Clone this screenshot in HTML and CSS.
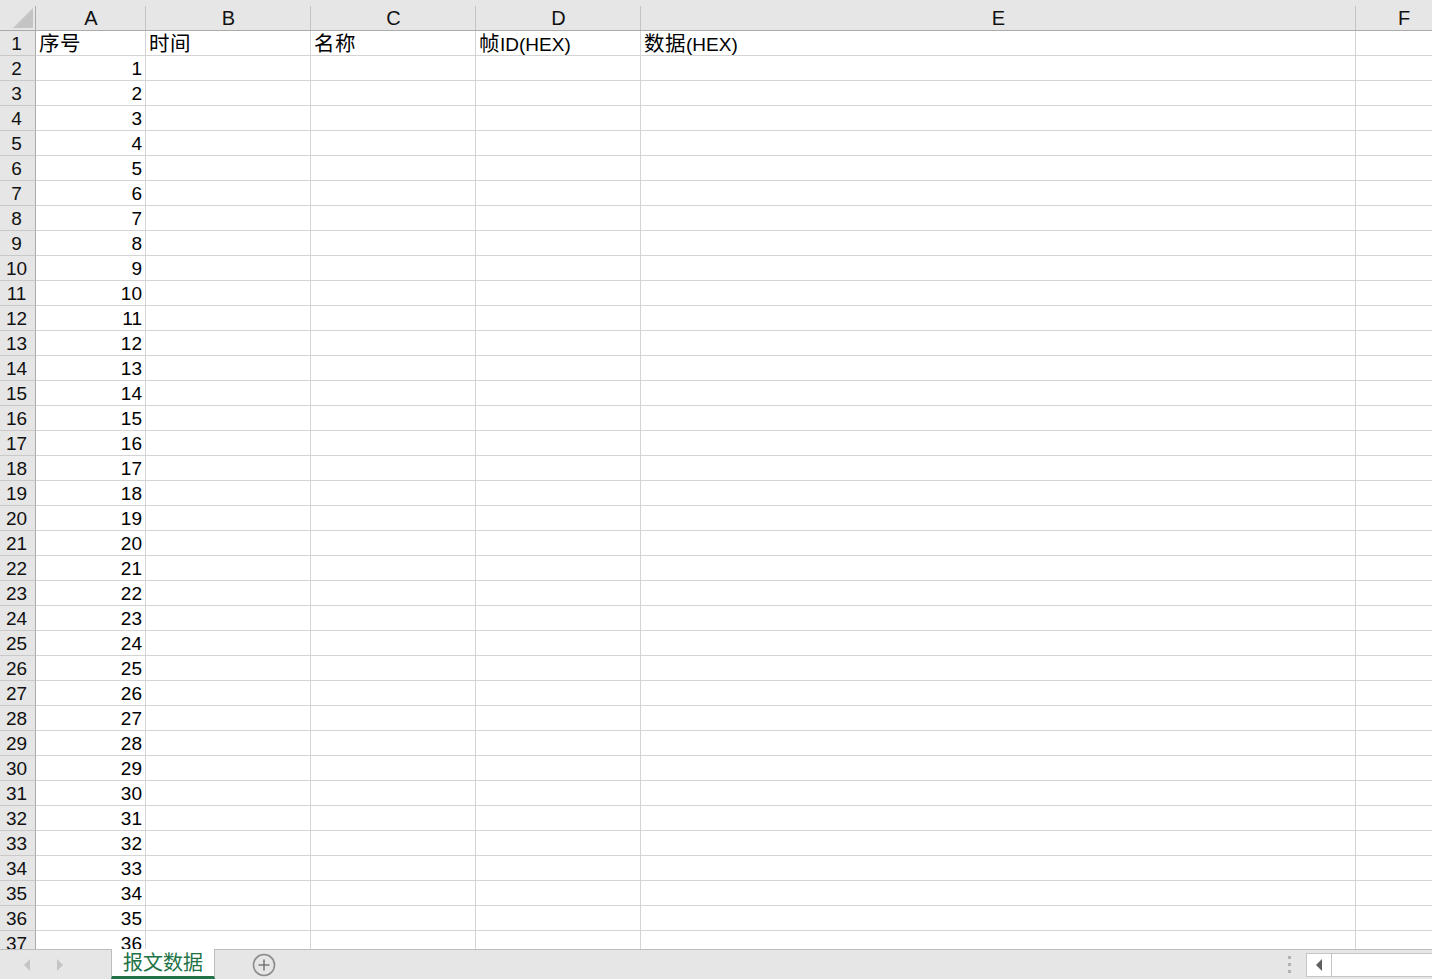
FILE: index.html
```html
<!DOCTYPE html>
<html lang="zh-CN">
<head>
    <meta charset="UTF-8">
    <title>报文数据</title>
    <link rel="stylesheet" href="styles.css">
</head>
<body>
<div class="book">
    <div class="sheet">
        <div class="row head">
            <span class="corner"><i class="tri"></i></span><span>A</span><span>B</span><span>C</span><span>D</span><span>E</span><span>F</span>
        </div>
        <div class="row"><span class="rh">1</span><span><em>序号</em></span><span><em>时间</em></span><span><em>名称</em></span><span><em>帧</em>ID(HEX)</span><span><em>数据</em>(HEX)</span><span></span></div>
        <div class="row"><span class="rh">2</span><span class="num">1</span><span></span><span></span><span></span><span></span><span></span></div>
        <div class="row"><span class="rh">3</span><span class="num">2</span><span></span><span></span><span></span><span></span><span></span></div>
        <div class="row"><span class="rh">4</span><span class="num">3</span><span></span><span></span><span></span><span></span><span></span></div>
        <div class="row"><span class="rh">5</span><span class="num">4</span><span></span><span></span><span></span><span></span><span></span></div>
        <div class="row"><span class="rh">6</span><span class="num">5</span><span></span><span></span><span></span><span></span><span></span></div>
        <div class="row"><span class="rh">7</span><span class="num">6</span><span></span><span></span><span></span><span></span><span></span></div>
        <div class="row"><span class="rh">8</span><span class="num">7</span><span></span><span></span><span></span><span></span><span></span></div>
        <div class="row"><span class="rh">9</span><span class="num">8</span><span></span><span></span><span></span><span></span><span></span></div>
        <div class="row"><span class="rh">10</span><span class="num">9</span><span></span><span></span><span></span><span></span><span></span></div>
        <div class="row"><span class="rh">11</span><span class="num">10</span><span></span><span></span><span></span><span></span><span></span></div>
        <div class="row"><span class="rh">12</span><span class="num">11</span><span></span><span></span><span></span><span></span><span></span></div>
        <div class="row"><span class="rh">13</span><span class="num">12</span><span></span><span></span><span></span><span></span><span></span></div>
        <div class="row"><span class="rh">14</span><span class="num">13</span><span></span><span></span><span></span><span></span><span></span></div>
        <div class="row"><span class="rh">15</span><span class="num">14</span><span></span><span></span><span></span><span></span><span></span></div>
        <div class="row"><span class="rh">16</span><span class="num">15</span><span></span><span></span><span></span><span></span><span></span></div>
        <div class="row"><span class="rh">17</span><span class="num">16</span><span></span><span></span><span></span><span></span><span></span></div>
        <div class="row"><span class="rh">18</span><span class="num">17</span><span></span><span></span><span></span><span></span><span></span></div>
        <div class="row"><span class="rh">19</span><span class="num">18</span><span></span><span></span><span></span><span></span><span></span></div>
        <div class="row"><span class="rh">20</span><span class="num">19</span><span></span><span></span><span></span><span></span><span></span></div>
        <div class="row"><span class="rh">21</span><span class="num">20</span><span></span><span></span><span></span><span></span><span></span></div>
        <div class="row"><span class="rh">22</span><span class="num">21</span><span></span><span></span><span></span><span></span><span></span></div>
        <div class="row"><span class="rh">23</span><span class="num">22</span><span></span><span></span><span></span><span></span><span></span></div>
        <div class="row"><span class="rh">24</span><span class="num">23</span><span></span><span></span><span></span><span></span><span></span></div>
        <div class="row"><span class="rh">25</span><span class="num">24</span><span></span><span></span><span></span><span></span><span></span></div>
        <div class="row"><span class="rh">26</span><span class="num">25</span><span></span><span></span><span></span><span></span><span></span></div>
        <div class="row"><span class="rh">27</span><span class="num">26</span><span></span><span></span><span></span><span></span><span></span></div>
        <div class="row"><span class="rh">28</span><span class="num">27</span><span></span><span></span><span></span><span></span><span></span></div>
        <div class="row"><span class="rh">29</span><span class="num">28</span><span></span><span></span><span></span><span></span><span></span></div>
        <div class="row"><span class="rh">30</span><span class="num">29</span><span></span><span></span><span></span><span></span><span></span></div>
        <div class="row"><span class="rh">31</span><span class="num">30</span><span></span><span></span><span></span><span></span><span></span></div>
        <div class="row"><span class="rh">32</span><span class="num">31</span><span></span><span></span><span></span><span></span><span></span></div>
        <div class="row"><span class="rh">33</span><span class="num">32</span><span></span><span></span><span></span><span></span><span></span></div>
        <div class="row"><span class="rh">34</span><span class="num">33</span><span></span><span></span><span></span><span></span><span></span></div>
        <div class="row"><span class="rh">35</span><span class="num">34</span><span></span><span></span><span></span><span></span><span></span></div>
        <div class="row"><span class="rh">36</span><span class="num">35</span><span></span><span></span><span></span><span></span><span></span></div>
        <div class="row"><span class="rh">37</span><span class="num">36</span><span></span><span></span><span></span><span></span><span></span></div>
    </div>
    <div class="tabbar">
        <div class="navs">
            <svg width="10" height="14" viewBox="0 0 10 14"><path d="M8 1 L2 7 L8 13 Z" fill="#c4c4c4"/></svg>
            <svg width="10" height="14" viewBox="0 0 10 14"><path d="M2 1 L8 7 L2 13 Z" fill="#c4c4c4"/></svg>
        </div>
        <div class="tab">报文数据</div>
        <div class="add">
            <svg width="26" height="26" viewBox="0 0 26 26"><circle cx="13" cy="13" r="10.5" fill="none" stroke="#8c8c8c" stroke-width="1.6"/><path d="M13 7.5 V18.5 M7.5 13 H18.5" stroke="#7a7a7a" stroke-width="1.6"/></svg>
        </div>
        <div class="grow"></div>
        <div class="dots"><i></i><i></i><i></i></div>
        <div class="hscroll">
            <span class="arrow"><svg width="8" height="12" viewBox="0 0 8 12"><path d="M7 0 L1 6 L7 12 Z" fill="#606060"/></svg></span>
            <span class="track"></span>
        </div>
    </div>
</div>
</body>
</html>
```

FILE: styles.css
```css
* {
    margin: 0;
    padding: 0;
    box-sizing: border-box;
}
body {
    width: 1432px;
    height: 979px;
    overflow: hidden;
    background: #fff;
    font-family: "Liberation Sans", "Noto Sans CJK SC", sans-serif;
    font-size: 19px;
    color: #000;
}
em {
    font-style: normal;
    font-size: 20.5px;
    letter-spacing: 0.5px;
}
.book {
    display: flex;
    flex-direction: column;
    height: 979px;
}
.sheet {
    height: 949px;
    overflow: hidden;
}
.row {
    display: grid;
    grid-template-columns: 36px 110px 165px 165px 165px 715px 96px;
    height: 25px;
}
.row > span {
    border-right: 1px solid #d4d4d4;
    border-bottom: 1px solid #d4d4d4;
    padding: 2px 3px 0;
    line-height: 22px;
    white-space: nowrap;
    overflow: hidden;
}
.row > .num {
    text-align: right;
}
.row > .rh {
    background: #e6e6e6;
    border-right: 1px solid #ababab;
    border-bottom: 1px solid #c9c9c9;
    text-align: center;
    padding: 2px 2px 0 0;
    color: #111;
}
.head {
    height: 31px;
    background: #e6e6e6;
}
.head > span {
    position: relative;
    border-right: none;
    border-bottom: 1px solid #ababab;
    text-align: center;
    padding: 0;
    line-height: 36px;
    font-size: 20px;
    color: #111;
}
.head > span::after {
    content: "";
    position: absolute;
    right: 0;
    top: 6px;
    bottom: 0;
    border-right: 1px solid #c3c3c3;
}
.head > .corner::after {
    border-right-color: #ababab;
}
.tri {
    position: absolute;
    left: 13px;
    top: 8px;
    width: 0;
    height: 0;
    border-left: 20px solid transparent;
    border-bottom: 20px solid #c4c4c4;
}
.tabbar {
    display: flex;
    align-items: stretch;
    height: 30px;
    background: #e6e6e6;
    border-top: 1px solid #bdbdbd;
}
.navs {
    width: 111px;
    display: flex;
    align-items: center;
    gap: 23px;
    padding-left: 22px;
}
.tab {
    width: 104px;
    margin-top: -1px;
    background: #fff;
    border-left: 1px solid #bdbdbd;
    border-right: 1px solid #bdbdbd;
    border-bottom: 3px solid #217346;
    color: #217346;
    font-size: 20px;
    text-align: center;
    line-height: 28px;
}
.add {
    display: flex;
    align-items: center;
    padding-left: 36px;
}
.grow {
    flex: 1;
}
.dots {
    display: flex;
    flex-direction: column;
    justify-content: center;
    gap: 4px;
    width: 19px;
    padding-left: 1px;
}
.dots i {
    display: block;
    width: 3px;
    height: 3px;
    background: #b3b3b3;
}
.hscroll {
    width: 126px;
    margin: 3px 0 2px;
    display: flex;
    background: #fff;
    border: 1px solid #c6c6c6;
    border-right: none;
}
.hscroll .arrow {
    width: 25px;
    border-right: 1px solid #c6c6c6;
    display: flex;
    align-items: center;
    justify-content: center;
}
.hscroll .track {
    flex: 1;
}
```
